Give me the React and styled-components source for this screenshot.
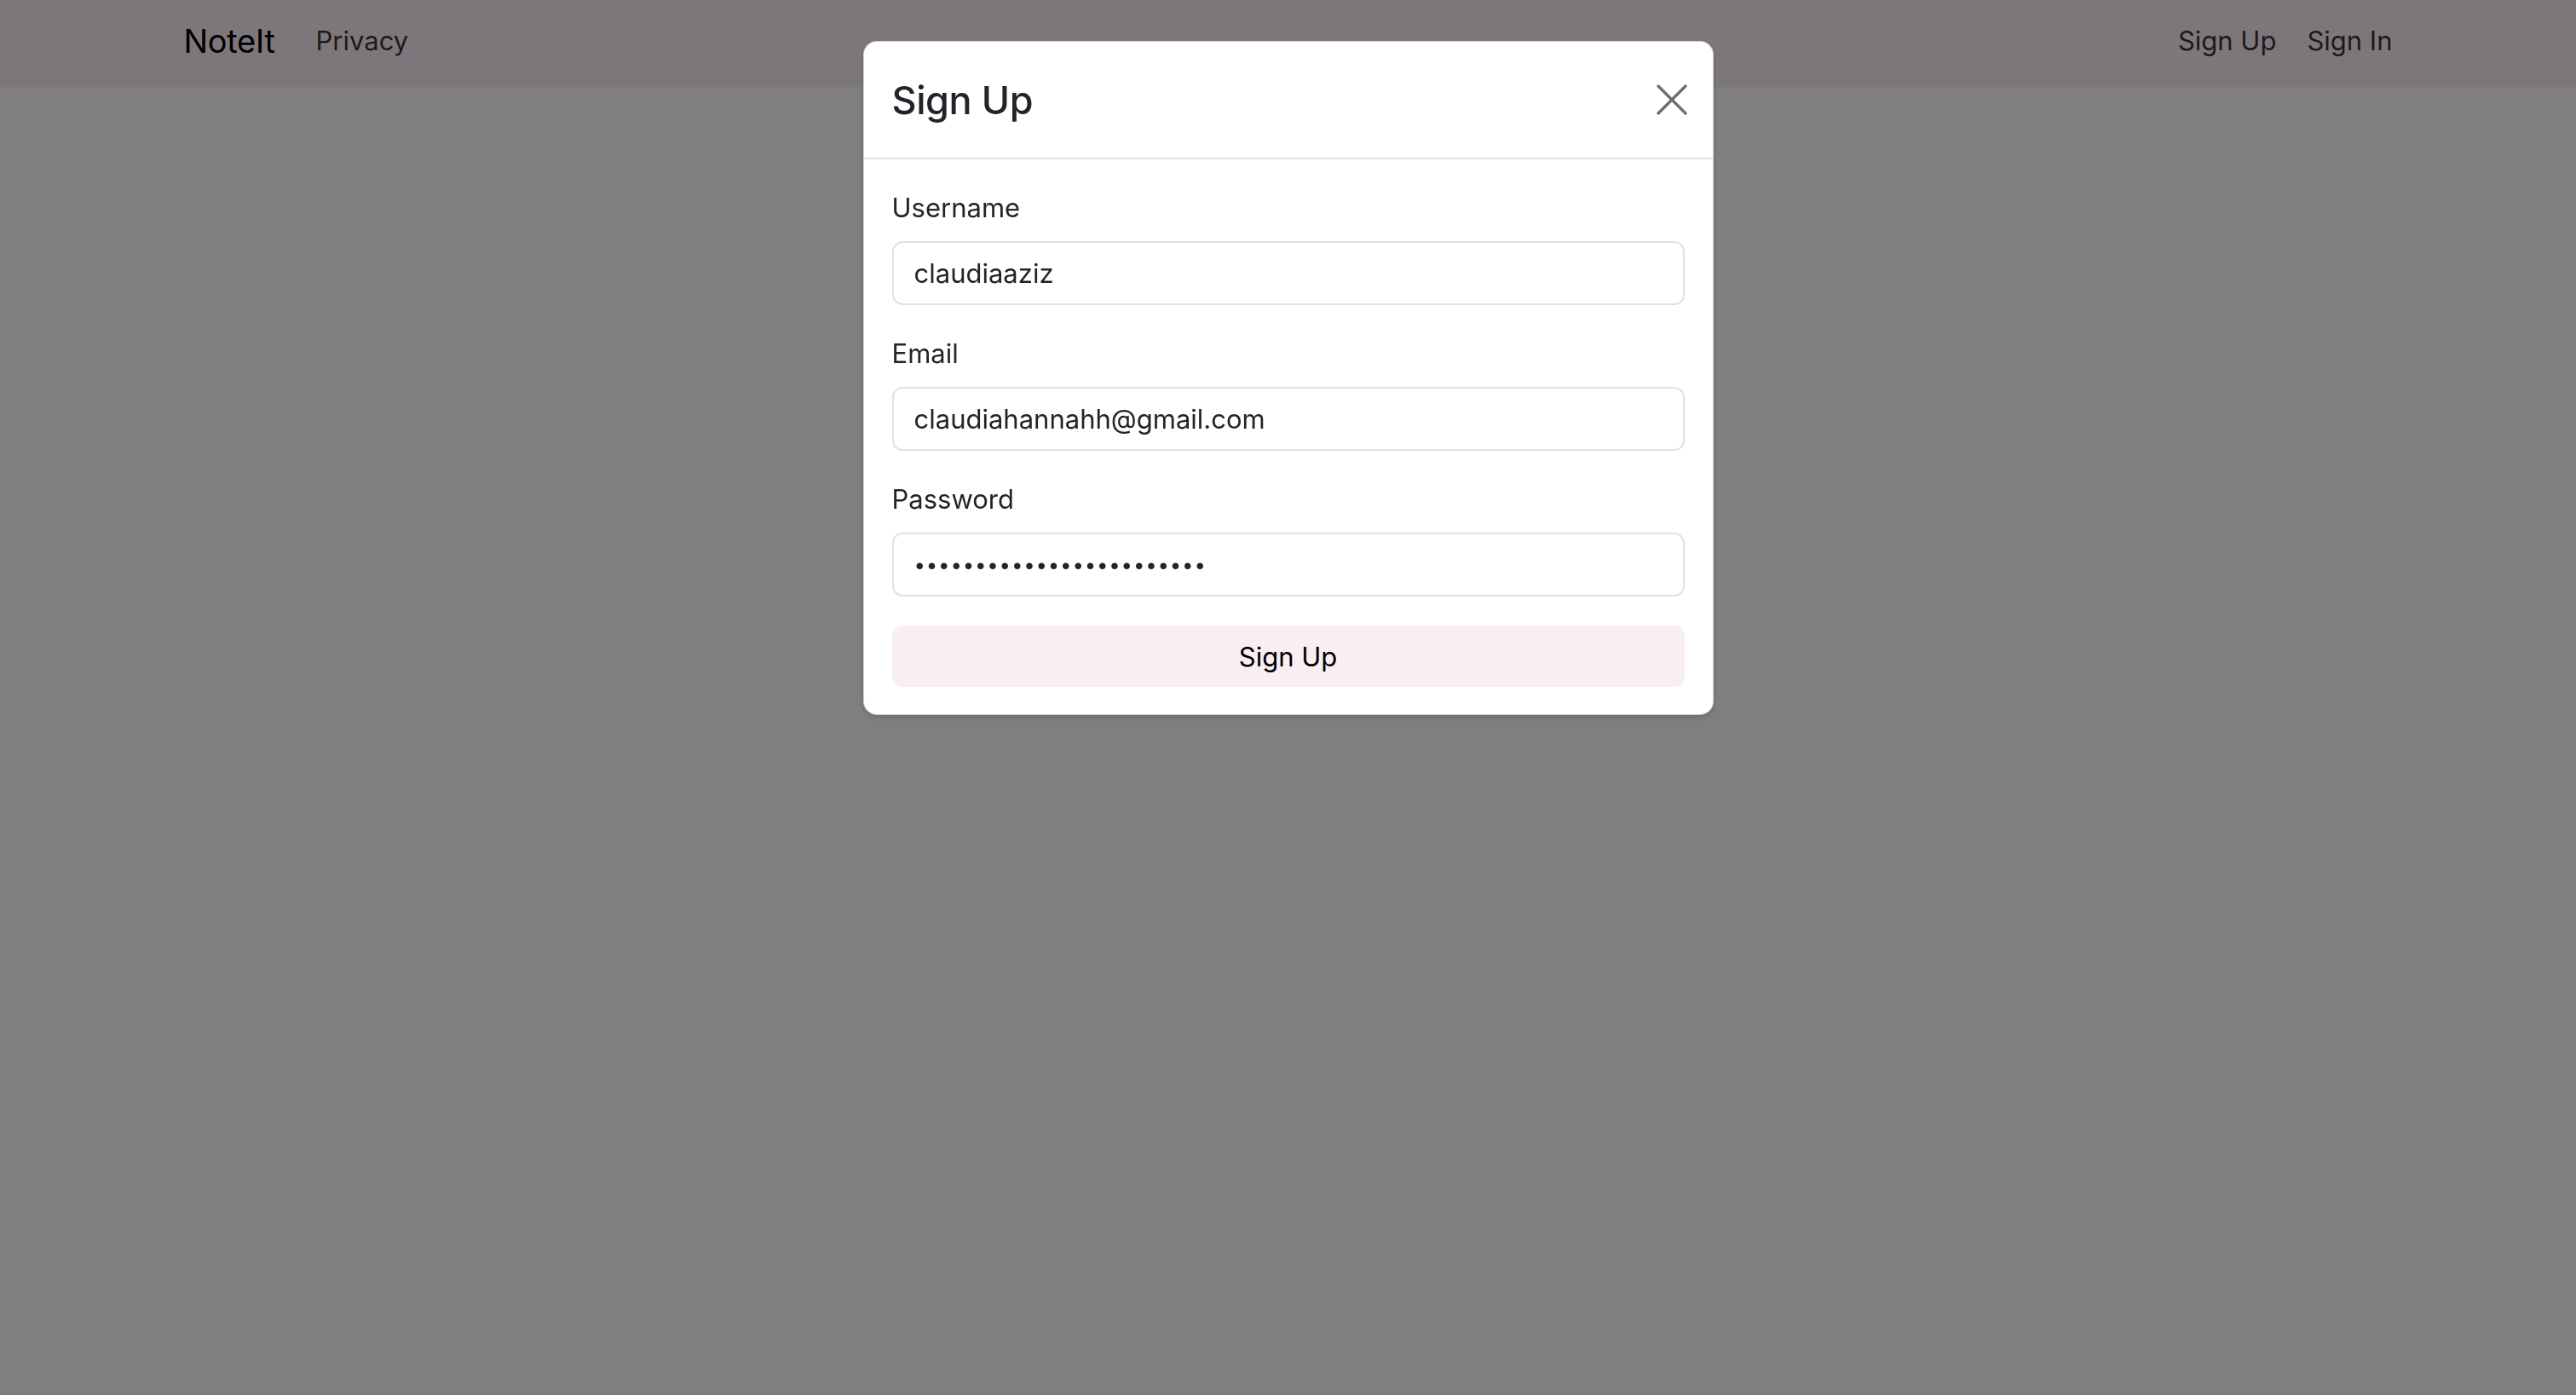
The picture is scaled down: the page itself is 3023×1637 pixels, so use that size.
import React, {useState} from 'react'
import styled, {createGlobalStyle} from 'styled-components'

const GlobalStyle = createGlobalStyle`
    html, body {
        margin: 0;
        padding: 0;
        background: #ffffff;
        font-family: Inter, "Noto Sans", "Liberation Sans", sans-serif;
        color: #212529;
    }
    * {
        box-sizing: border-box;
    }
`
const Page = styled.div`
    width: 100%;
    min-height: 1637px;
    background: #ffffff;
`
const NavBar = styled.nav`
    width: 100%;
    height: 102px;
    background: #faeef6;
    display: flex;
    justify-content: center;
`
const NavContainer = styled.div`
    width: 2640px;
    padding: 0 24px 7px;
    display: flex;
    align-items: center;
    justify-content: space-between;
`
const NavGroup = styled.div`
    display: flex;
    align-items: center;
    gap: ${props => props.gap || 0}px;
`
const Brand = styled.a`
    font-size: 38px;
    color: #000;
    margin-right: 32px;
    text-decoration: none;
    letter-spacing: -0.3px;
`
const NavLink = styled.a`
    font-size: 31px;
    color: rgba(0, 0, 0, 0.8);
    text-decoration: none;
    padding: 0 ${props => props.px || 0}px;
`
const Backdrop = styled.div`
    position: fixed;
    inset: 0;
    background: rgba(0, 0, 0, 0.5);
    display: flex;
    flex-direction: column;
    align-items: center;
    padding-top: 48px;
`
const Modal = styled.div`
    width: 998px;
    background: #fff;
    border: 1px solid rgba(0, 0, 0, 0.18);
    border-radius: 16px;
    box-shadow: 0 3px 6px rgba(0, 0, 0, 0.15);
    overflow: hidden;
`
const ModalHeader = styled.div`
    height: 138px;
    padding: 0 33px;
    display: flex;
    align-items: center;
    justify-content: space-between;
    border-bottom: 2px solid #dee2e6;
`
const Title = styled.h5`
    margin: 0;
    font-size: 45px;
    font-weight: 500;
    color: #212529;
    letter-spacing: -0.4px;
`
const CloseBtn = styled.button`
    width: 44px;
    height: 44px;
    border: none;
    background: transparent;
    padding: 0;
    display: flex;
    align-items: center;
    justify-content: center;
    margin-right: -7px;
    cursor: pointer;
`
const ModalBody = styled.form`
    padding: 34px 33px 32px;
    display: flex;
    flex-direction: column;
`
const FormGroup = styled.div`
    display: flex;
    flex-direction: column;
    margin-bottom: 34px;
`
const Label = styled.label`
    font-size: 31px;
    line-height: 46px;
    margin-bottom: 16px;
    color: #212529;
`
const StyledInput = styled.input`
    width: 100%;
    height: 75px;
    border: 2px solid #dee2e6;
    border-radius: 12px;
    padding: 0 24px;
    font-family: Inter, "Noto Sans", "Liberation Sans", sans-serif;
    font-size: ${props => props.type === 'password' ? '24px' : '31px'};
    color: #212529;
    outline: none;
    background: #fff;
    letter-spacing: ${props => props.type === 'password' ? '0.8px' : '0'};
`
const SubmitBtn = styled.button`
    width: 100%;
    height: 72px;
    border: none;
    border-radius: 12px;
    background: #f9eef4;
    color: #000;
    font-family: Inter, "Noto Sans", "Liberation Sans", sans-serif;
    font-size: 31px;
    cursor: pointer;
`

const CloseIcon = () => (
    <svg width="36" height="36" viewBox="0 0 36 36">
        <path d="M2 2 L34 34 M34 2 L2 34" stroke="#6d6d6d" strokeWidth="3.2" strokeLinecap="round" />
    </svg>
)

const App = () => {
    const [form, setForm] = useState({
        username: 'claudiaaziz',
        email: 'claudiahannahh@gmail.com',
        password: 'abcdefghijklmnopqrstuvwx'
    })
    const onChange = (evt) => {
        setForm({...form, [evt.target.name]: evt.target.value})
    }
    const onSubmit = (evt) => {
        evt.preventDefault()
    }
    return (
        <Page>
            <GlobalStyle />
            <NavBar>
                <NavContainer>
                    <NavGroup>
                        <Brand href="#">NoteIt</Brand>
                        <NavLink px={16} href="#">Privacy</NavLink>
                    </NavGroup>
                    <NavGroup gap={20}>
                        <NavLink px={16} href="#">Sign Up</NavLink>
                        <NavLink href="#">Sign In</NavLink>
                    </NavGroup>
                </NavContainer>
            </NavBar>
            <Backdrop>
                <Modal>
                    <ModalHeader>
                        <Title>Sign Up</Title>
                        <CloseBtn type="button"><CloseIcon /></CloseBtn>
                    </ModalHeader>
                    <ModalBody onSubmit={onSubmit}>
                        <FormGroup>
                            <Label>Username</Label>
                            <StyledInput name="username" type="text" value={form.username} onChange={onChange} />
                        </FormGroup>
                        <FormGroup>
                            <Label>Email</Label>
                            <StyledInput name="email" type="email" value={form.email} onChange={onChange} />
                        </FormGroup>
                        <FormGroup>
                            <Label>Password</Label>
                            <StyledInput name="password" type="password" value={form.password} onChange={onChange} />
                        </FormGroup>
                        <SubmitBtn type="submit">Sign Up</SubmitBtn>
                    </ModalBody>
                </Modal>
            </Backdrop>
        </Page>
    )
}
export default App
